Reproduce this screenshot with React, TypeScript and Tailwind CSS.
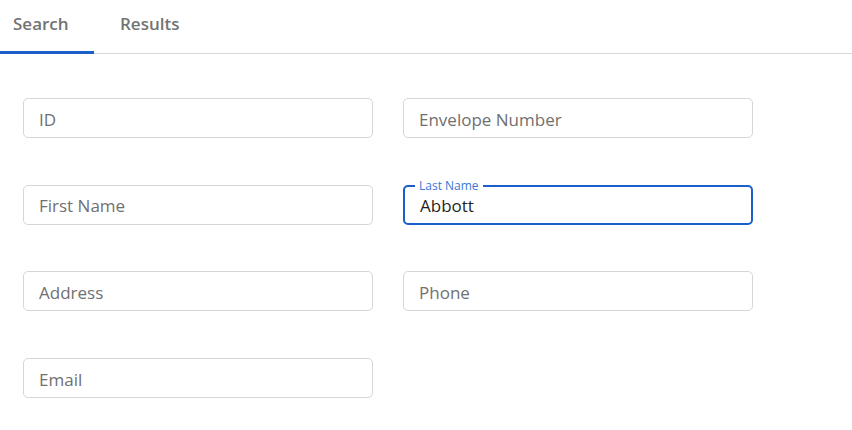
import React from 'react';

const FIELDS: { label: string; value?: string }[] = [
  { label: 'ID' },
  { label: 'Envelope Number' },
  { label: 'First Name' },
  { label: 'Last Name', value: 'Abbott' },
  { label: 'Address' },
  { label: 'Phone' },
  { label: 'Email' },
];

function Field({ label, value }: { label: string; value?: string }) {
  if (value) {
    return (
      <div className="relative flex h-10 items-center rounded-[5px] border-2 border-[#1b5fcc] pl-[15px]">
        <span className="absolute -top-[9px] left-[10px] bg-white px-[4px] text-[12px] leading-[16px] text-[#3a78d8]">{label}</span>
        <span className="pt-[2px] text-[17px] text-[#1f1f1f]">{value}</span>
      </div>
    );
  }
  return (
    <div className="flex h-10 items-center rounded-[5px] border border-[#d6d6d6] pl-[15px]">
      <span className="pt-[3px] text-[17px] text-[#707070]">{label}</span>
    </div>
  );
}

export default function App() {
  return (
    <div className="h-[430px] w-[852px] bg-white font-['Open_Sans',sans-serif]">
      <div className="flex h-[54px] border-b border-[#d9d9d9]">
        <button className="relative flex w-[94px] items-start pl-[13px] pt-[11px] text-[17px] font-semibold text-[#737373]">
          Search
          <span className="absolute -bottom-px left-0 h-[3px] w-full bg-[#1b5fcc]" />
        </button>
        <button className="flex items-start pl-[26px] pt-[11px] text-[17px] font-semibold text-[#737373]">Results</button>
      </div>
      <div className="grid w-[753px] grid-cols-2 gap-x-[30px] gap-y-[46.7px] pl-[23px] pt-[44px]">
        {FIELDS.map((f) => (
          <Field key={f.label} label={f.label} value={f.value} />
        ))}
      </div>
    </div>
  );
}
